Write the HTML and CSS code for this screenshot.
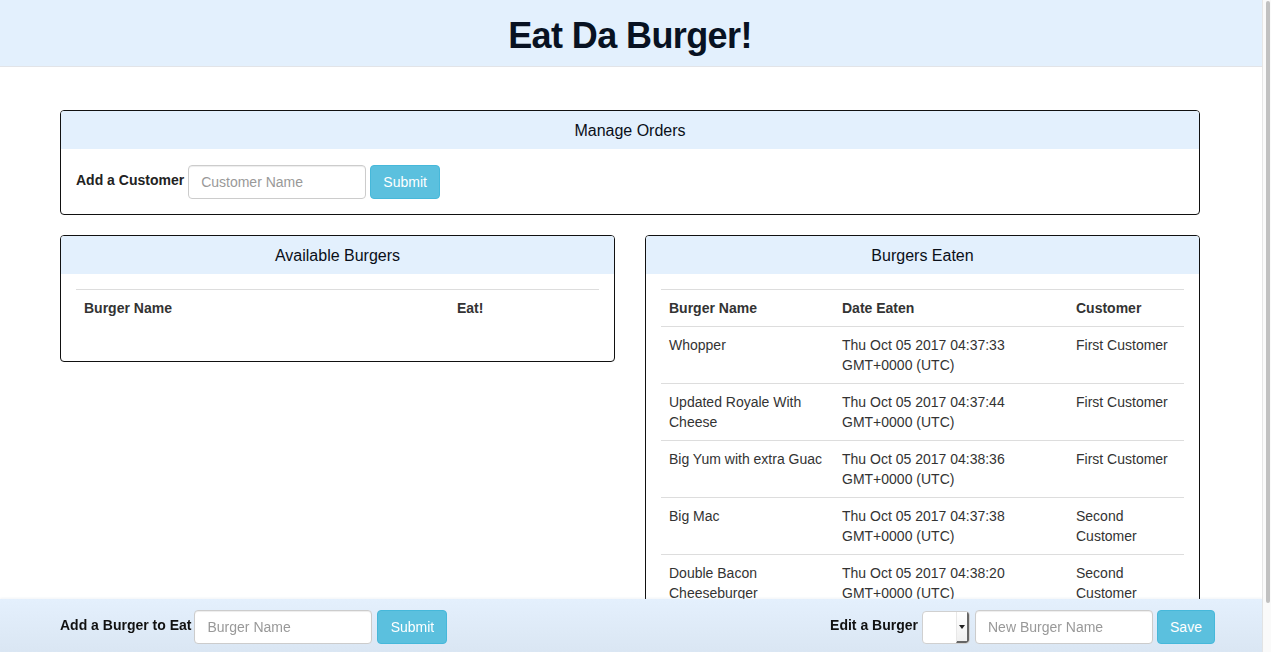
FILE: index.html
```html
<!DOCTYPE html>
<html lang="en">
<head>
<meta charset="utf-8">
<title>Eat Da Burger!</title>
<link rel="stylesheet" href="styles.css">
</head>
<body>
<div class="app">
  <div class="scroller">
    <header class="site-header">
      <h1 class="site-title">Eat Da Burger!</h1>
    </header>
    <main class="container">
      <section class="panel">
        <div class="panel-heading"><h2 class="panel-title">Manage Orders</h2></div>
        <div class="panel-body panel-body-form">
          <form class="inline-form">
            <label class="form-label">Add a Customer</label>
            <input class="form-control" type="text" placeholder="Customer Name">
            <button class="btn" type="button">Submit</button>
          </form>
        </div>
      </section>
      <div class="row">
        <section class="panel col">
          <div class="panel-heading"><h2 class="panel-title">Available Burgers</h2></div>
          <div class="panel-body">
            <table class="table">
              <colgroup><col class="c-avail-name"><col></colgroup>
              <thead><tr><th>Burger Name</th><th>Eat!</th></tr></thead>
              <tbody></tbody>
            </table>
          </div>
        </section>
        <section class="panel col">
          <div class="panel-heading"><h2 class="panel-title">Burgers Eaten</h2></div>
          <div class="panel-body">
            <table class="table">
              <colgroup><col class="c-name"><col class="c-date"><col></colgroup>
              <thead><tr><th>Burger Name</th><th>Date Eaten</th><th>Customer</th></tr></thead>
              <tbody>
                <tr><td>Whopper</td><td>Thu Oct 05 2017 04:37:33 GMT+0000 (UTC)</td><td>First Customer</td></tr>
                <tr><td>Updated Royale With Cheese</td><td>Thu Oct 05 2017 04:37:44 GMT+0000 (UTC)</td><td>First Customer</td></tr>
                <tr><td>Big Yum with extra Guac</td><td>Thu Oct 05 2017 04:38:36 GMT+0000 (UTC)</td><td>First Customer</td></tr>
                <tr><td>Big Mac</td><td>Thu Oct 05 2017 04:37:38 GMT+0000 (UTC)</td><td>Second Customer</td></tr>
                <tr><td>Double Bacon Cheeseburger</td><td>Thu Oct 05 2017 04:38:20 GMT+0000 (UTC)</td><td>Second Customer</td></tr>
              </tbody>
            </table>
          </div>
        </section>
      </div>
    </main>
  </div>
  <div class="scrollbar"><div class="scrollbar-thumb"></div></div>
</div>
<footer class="footer">
  <form class="inline-form">
    <label class="form-label">Add a Burger to Eat</label>
    <input class="form-control" type="text" placeholder="Burger Name">
    <button class="btn" type="button">Submit</button>
  </form>
  <form class="inline-form">
    <label class="form-label">Edit a Burger</label>
    <div class="select-box"><span class="select-arrow"></span></div>
    <input class="form-control" type="text" placeholder="New Burger Name">
    <button class="btn btn-save" type="button">Save</button>
  </form>
</footer>
</body>
</html>
```

FILE: styles.css
```css
html, body {
  margin: 0;
  padding: 0;
  height: 100%;
  overflow: hidden;
}
body {
  font-family: "Liberation Sans", Arial, sans-serif;
  font-size: 14px;
  line-height: 20px;
  color: #333;
  background: #fff;
}
.app {
  display: flex;
  height: 100vh;
}
.scroller {
  flex: 1;
  min-width: 0;
  overflow: hidden;
}
.scrollbar {
  flex: 0 0 9px;
  box-sizing: border-box;
  background: #fafafa;
  border-left: 1px solid #e6e6e6;
  padding: 1px 1px 0 3px;
}
.scrollbar-thumb {
  height: 602px;
  background: #c1c1c1;
  border-radius: 3px;
}
.site-header {
  background: #e3f0fd;
  border-bottom: 1px solid #e2e4e8;
  height: 66px;
  display: flex;
  align-items: center;
  justify-content: center;
}
.site-title {
  margin: 6px 2px 0 0;
  font-size: 36px;
  line-height: 40px;
  font-weight: bold;
  color: #081222;
  letter-spacing: -0.6px;
}
.container {
  width: 1140px;
  margin: 0 auto;
  padding: 43px 0 59px;
  position: relative;
  left: -1px;
}
.panel {
  border: 1px solid #111;
  border-radius: 4px;
  overflow: hidden;
  background: #fff;
  margin-bottom: 20px;
}
.panel-heading {
  background: #e3f0fd;
  height: 38px;
  display: flex;
  align-items: center;
  justify-content: center;
}
.panel-title {
  margin: 1px 0 0;
  font-size: 16px;
  font-weight: normal;
  color: #0a0f18;
}
.panel-body {
  padding: 15px;
}
.panel-body-form {
  padding-top: 16px;
}
.row {
  display: flex;
  gap: 30px;
  align-items: flex-start;
}
.row .col {
  flex: 0 0 555px;
  box-sizing: border-box;
}
.inline-form {
  display: flex;
  align-items: center;
}
.form-label {
  font-weight: bold;
  color: #222;
  margin-right: 4px;
  margin-top: -4px;
}
.form-control {
  box-sizing: border-box;
  width: 178px;
  height: 34px;
  padding: 6px 12px;
  font-family: inherit;
  font-size: 14px;
  color: #555;
  border: 1px solid #ccc;
  border-radius: 4px;
  box-shadow: inset 0 1px 1px rgba(0,0,0,.075);
  margin-right: 4px;
  background: #fff;
}
.form-control::placeholder {
  color: #999;
}
.btn {
  box-sizing: border-box;
  width: 70px;
  height: 34px;
  font-family: inherit;
  font-size: 14px;
  color: #fff;
  background: #5bc0de;
  border: 1px solid #46b8da;
  border-radius: 4px;
  padding: 0;
}
.table {
  width: 100%;
  border-collapse: collapse;
  border-spacing: 0;
  margin-bottom: 20px;
  table-layout: fixed;
}
.table th, .table td {
  text-align: left;
  vertical-align: top;
  padding: 8px;
  border-top: 1px solid #ddd;
  line-height: 20px;
}
.table th {
  font-weight: bold;
  color: #333;
}
.table td {
  color: #333;
}
.c-avail-name { width: 373px; }
.c-name { width: 173px; }
.c-date { width: 234px; }
.footer {
  position: fixed;
  left: 0;
  right: 9px;
  bottom: 0;
  height: 53px;
  box-sizing: border-box;
  padding: 3px 47px 0 60px;
  display: flex;
  align-items: center;
  justify-content: space-between;
  background: linear-gradient(#e4f0fd, #dae6f3);
  box-shadow: 0 -1px 2px rgba(160,180,200,.15);
}
.footer .form-label {
  color: #111;
  margin-right: 3px;
}
.footer .form-control {
  margin-right: 5px;
}
.footer .inline-form + .inline-form .form-control {
  margin-right: 4px;
}
.btn-save {
  width: 58px;
}
.select-box {
  box-sizing: border-box;
  width: 48px;
  height: 33px;
  border: 1px solid #d0d0d0;
  border-radius: 4px;
  background: #fff;
  margin: 0 5px 0 1px;
  display: flex;
  justify-content: flex-end;
  overflow: hidden;
}
.select-arrow {
  width: 13px;
  height: 100%;
  border-left: 1px solid #e8e8e8;
  border-right: 2px solid #666;
  border-bottom: 2px solid #666;
  box-sizing: border-box;
  border-bottom-right-radius: 3px;
  display: flex;
  align-items: center;
  justify-content: center;
  background: linear-gradient(#fff, #f0f0f0);
}
.select-arrow::after {
  content: "";
  border-left: 3px solid transparent;
  border-right: 3px solid transparent;
  border-top: 4px solid #222;
  margin-top: 1px;
}
```
